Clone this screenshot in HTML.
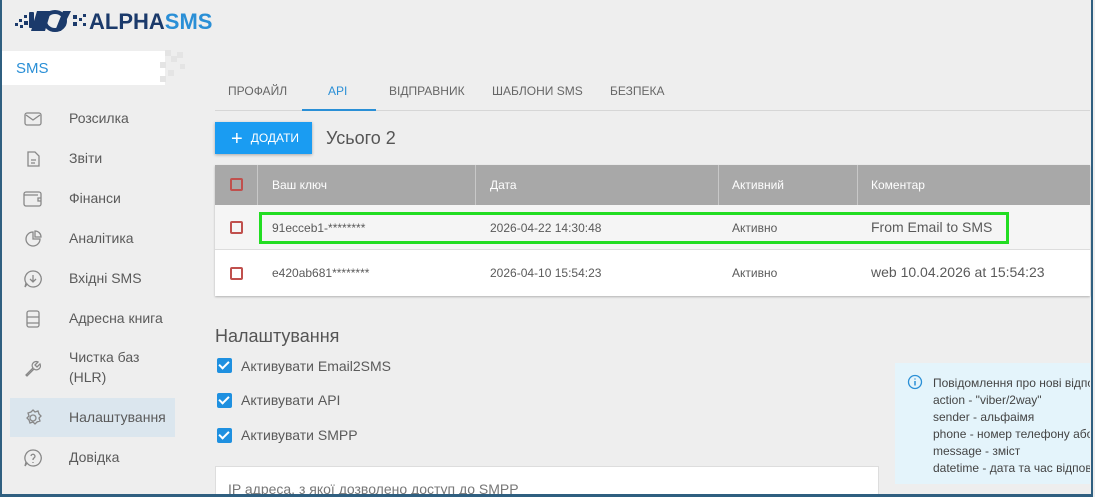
<!DOCTYPE html>
<html style="width:1095px;height:497px;overflow:hidden"><head><meta charset="utf-8"><style>
*{margin:0;padding:0;box-sizing:border-box}
body{width:1095px;height:497px;overflow:hidden;background:#eeeeee;font-family:"Liberation Sans",Arial,sans-serif;position:relative;color:#5a5a5a}
.a{position:absolute;white-space:nowrap}
.frame{position:absolute;left:0;top:0;width:1093px;height:497px;border-left:2px solid #2f5f80;border-right:2px solid #2f5f80;border-bottom:3px solid #2f5f80;pointer-events:none;z-index:10}
.side{font-size:14px;color:#5a5a5a}
.ic{position:absolute;left:23px;width:20px;height:20px}
.tab{font-size:12px;color:#666;top:84px}
.cb{position:absolute;width:13px;height:13px;border:2px solid #c0504d;border-radius:2px}
.chk{position:absolute;left:217px;width:15px;height:15px;background:#1e90e0;border-radius:2px}
.chk:after{content:"";position:absolute;left:4px;top:1px;width:4px;height:8px;border:solid #fff;border-width:0 2px 2px 0;transform:rotate(45deg)}
</style></head><body>
<div class="frame"></div>
<svg class="a" style="left:15px;top:9px" width="75" height="24" viewBox="0 0 75 24">
<g fill="#1b3a6b"><rect x="0" y="14" width="3" height="3"/><rect x="4" y="10" width="3" height="3"/><rect x="5" y="16" width="3" height="3"/><rect x="9" y="6" width="3" height="3"/><rect x="9" y="12" width="4" height="4"/><rect x="14" y="3" width="5" height="16" rx="1"/><path d="M22 2 h14 l-6 20 h-14z"/><ellipse cx="40" cy="12" rx="10" ry="9" fill="none" stroke="#1b3a6b" stroke-width="4"/><path d="M48 2 l8 0 -10 20 -6 0z"/><rect x="58" y="6" width="4" height="4"/><rect x="58" y="13" width="4" height="4"/><rect x="64" y="9" width="3" height="3"/><rect x="68" y="5" width="3" height="3"/><rect x="68" y="14" width="3" height="3"/></g></svg>
<div class="a" style="left:89px;top:9px;font-size:22px;font-weight:bold;color:#1b3a6b">ALPHA<span style="color:#2a8fd6">SMS</span></div>
<div class="a" style="left:0;top:51px;width:165px;height:34px;background:#fff"></div>
<svg class="a" style="left:160px;top:50px" width="30" height="36"><g fill="#e4e4e4"><rect x="5" y="0" width="6" height="6"/><rect x="11" y="6" width="6" height="6"/><rect x="17" y="2" width="6" height="6"/><rect x="0" y="12" width="6" height="6"/><rect x="8" y="20" width="6" height="6"/><rect x="0" y="26" width="6" height="6"/><rect x="20" y="14" width="5" height="5"/></g></svg>
<div class="a" style="left:16px;top:60px;font-size:15px;color:#2a8fd6">SMS</div>
<div class="a" style="left:10px;top:398px;width:165px;height:39px;background:#dbe6ee"></div>
<svg class="ic" style="top:109px" viewBox="0 0 20 20" fill="none" stroke="#888" stroke-width="1.3"><rect x="2" y="4" width="16" height="12" rx="2"/><path d="M3 6 l7 5 7-5"/></svg>
<svg class="ic" style="top:149px" viewBox="0 0 20 20" fill="none" stroke="#888" stroke-width="1.3"><path d="M5 3h7l4 4v10H5z"/><path d="M8 11h5M8 14h4"/></svg>
<svg class="ic" style="top:189px" viewBox="0 0 20 20" fill="none" stroke="#888" stroke-width="1.3"><rect x="1" y="3" width="17" height="14" rx="2"/><path d="M1 6h14M18 9h-3v3h3"/></svg>
<svg class="ic" style="top:229px" viewBox="0 0 20 20" fill="none" stroke="#888" stroke-width="1.3"><path d="M10 3a7 7 0 1 0 7 7h-7z"/><path d="M12 2v6h6a6 6 0 0 0-6-6z"/></svg>
<svg class="ic" style="top:269px" viewBox="0 0 20 20" fill="none" stroke="#888" stroke-width="1.3"><path d="M10 2a8 8 0 1 1-6 13l-2 3 1-4a8 8 0 0 1 7-12z"/><path d="M10 6v7M7 10l3 3 3-3"/></svg>
<svg class="ic" style="top:309px" viewBox="0 0 20 20" fill="none" stroke="#888" stroke-width="1.3"><rect x="4" y="2" width="12" height="16" rx="2"/><path d="M4 8h12M4 14h12"/></svg>
<svg class="ic" style="top:358px" viewBox="0 0 20 20" fill="none" stroke="#888" stroke-width="1.3"><path d="M3 17l7-7a4 4 0 0 1 5-6l-3 3 2 2 3-3a4 4 0 0 1-6 5l-7 7z"/></svg>
<svg class="ic" style="top:408px" viewBox="0 0 20 20" fill="none" stroke="#888" stroke-width="1.3"><circle cx="10" cy="10" r="3"/><path d="M10 2l2 2 3-1 1 3 2 2-2 2 1 3-3 1-2 2-2-2-3 1-1-3-2-2 2-2-1-3 3-1z"/></svg>
<svg class="ic" style="top:448px" viewBox="0 0 20 20" fill="none" stroke="#888" stroke-width="1.3"><path d="M10 2a8 8 0 1 1-6 13l-2 3 1-4a8 8 0 0 1 7-12z"/><path d="M8 8a2 2 0 1 1 3 2c-1 .5-1 1-1 2M10 14v1"/></svg>
<div class="a side" style="left:69px;top:110px">Розсилка</div>
<div class="a side" style="left:69px;top:150px">Звіти</div>
<div class="a side" style="left:69px;top:190px">Фінанси</div>
<div class="a side" style="left:69px;top:230px">Аналітика</div>
<div class="a side" style="left:69px;top:270px">Вхідні SMS</div>
<div class="a side" style="left:69px;top:310px">Адресна книга</div>
<div class="a side" style="left:69px;top:347px;line-height:20px">Чистка баз<br>(HLR)</div>
<div class="a side" style="left:69px;top:409px">Налаштування</div>
<div class="a side" style="left:69px;top:449px">Довідка</div>
<div class="a tab" style="left:228px">ПРОФАЙЛ</div>
<div class="a tab" style="left:328px;color:#2a8fd6">API</div>
<div class="a tab" style="left:389px">ВІДПРАВНИК</div>
<div class="a tab" style="left:492px">ШАБЛОНИ SMS</div>
<div class="a tab" style="left:610px">БЕЗПЕКА</div>
<div class="a" style="left:215px;top:110px;width:875px;height:1px;background:#d6d6d6"></div>
<div class="a" style="left:302px;top:109px;width:74px;height:2px;background:#2a8fd6"></div>
<div class="a" style="left:215px;top:122px;width:97px;height:32px;background:#1a9cf2;box-shadow:0 1px 3px rgba(0,0,0,.3);color:#fff;font-size:12px;line-height:32px;padding-left:16px"><span style="font-size:20px;vertical-align:-3px;margin-right:8px">+</span>ДОДАТИ</div>
<div class="a" style="left:326px;top:128px;font-size:18px;color:#555">Усього 2</div>
<div class="a" style="left:215px;top:165px;width:875px;height:131px;background:#fff;box-shadow:0 1px 2px rgba(0,0,0,.25)"></div>
<div class="a" style="left:215px;top:165px;width:875px;height:40px;background:#a8a8a8"></div>
<div class="a" style="left:257px;top:165px;width:1px;height:40px;background:#c8c8c8"></div>
<div class="a" style="left:475px;top:165px;width:1px;height:40px;background:#c8c8c8"></div>
<div class="a" style="left:718px;top:165px;width:1px;height:40px;background:#c8c8c8"></div>
<div class="a" style="left:857px;top:165px;width:1px;height:40px;background:#c8c8c8"></div>
<div class="a" style="left:215px;top:205px;width:875px;height:45px;background:#f5f5f5;border-bottom:1px solid #ddd"></div>
<div class="cb" style="left:230px;top:178px"></div>
<div class="cb" style="left:230px;top:221px"></div>
<div class="cb" style="left:230px;top:267px"></div>
<div class="a" style="left:272px;top:178px;font-size:12px;color:#fff">Ваш ключ</div>
<div class="a" style="left:490px;top:178px;font-size:12px;color:#fff">Дата</div>
<div class="a" style="left:732px;top:178px;font-size:12px;color:#fff">Активний</div>
<div class="a" style="left:871px;top:178px;font-size:12px;color:#fff">Коментар</div>
<div class="a" style="left:272px;top:221px;font-size:12px">91ecceb1-********</div>
<div class="a" style="left:490px;top:221px;font-size:12px">2026-04-22 14:30:48</div>
<div class="a" style="left:732px;top:221px;font-size:12px">Активно</div>
<div class="a" style="left:871px;top:219px;font-size:14px">From Email to SMS</div>
<div class="a" style="left:272px;top:266px;font-size:12px">e420ab681********</div>
<div class="a" style="left:490px;top:266px;font-size:12px">2026-04-10 15:54:23</div>
<div class="a" style="left:732px;top:266px;font-size:12px">Активно</div>
<div class="a" style="left:871px;top:264px;font-size:14px">web 10.04.2026 at 15:54:23</div>
<div class="a" style="left:259px;top:212px;width:750px;height:32px;border:3px solid #22dd22"></div>
<div class="a" style="left:215px;top:326px;font-size:18px;color:#555">Налаштування</div>
<div class="chk" style="top:358px"></div>
<div class="chk" style="top:393px"></div>
<div class="chk" style="top:428px"></div>
<div class="a" style="left:241px;top:358px;font-size:14px">Активувати Email2SMS</div>
<div class="a" style="left:241px;top:392px;font-size:14px">Активувати API</div>
<div class="a" style="left:241px;top:427px;font-size:14px">Активувати SMPP</div>
<div class="a" style="left:215px;top:466px;width:664px;height:31px;background:#fff;border:1px solid #ddd;border-bottom:none"></div>
<div class="a" style="left:228px;top:481px;font-size:14px;color:#777">IP адреса, з якої дозволено доступ до SMPP</div>
<div class="a" style="left:895px;top:363px;width:195px;height:121px;background:#e4f4fb;overflow:hidden"><div class="a" style="left:38px;top:12px;font-size:12px;line-height:17px;color:#444">Повідомлення про нові відповіді<br>action - "viber/2way"<br>sender - альфаімя<br>phone - номер телефону абонента<br>message - зміст<br>datetime - дата та час відповіді</div></div>
<svg class="a" style="left:907px;top:374px" width="16" height="16" viewBox="0 0 16 16"><circle cx="8" cy="8" r="6.5" fill="none" stroke="#2a8fd6" stroke-width="1.3"/><path d="M8 7v4.5M8 4.5v1" stroke="#2a8fd6" stroke-width="1.5"/></svg>
</body></html>
